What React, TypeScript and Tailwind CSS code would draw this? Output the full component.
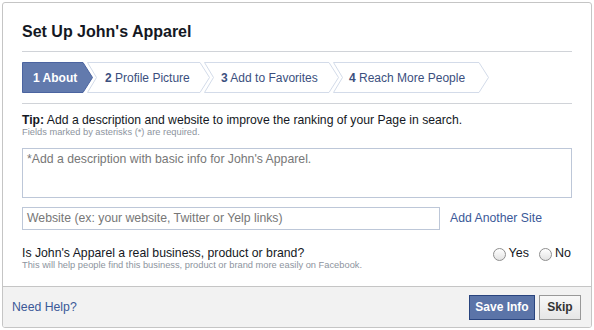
import React from "react";

const steps = [
  { n: "1", label: "About", w: 71, cls: "w-[71px] pl-[11px]", notch: false, active: true },
  { n: "2", label: "Profile Picture", w: 123, cls: "w-[123px] pl-[18px] -ml-1.5", notch: true, active: false },
  { n: "3", label: "Add to Favorites", w: 135, cls: "w-[135px] pl-[17px] -ml-1.5", notch: true, active: false },
  { n: "4", label: "Reach More People", w: 156, cls: "w-[156px] pl-[16px] -ml-1.5", notch: true, active: false },
];

function StepShape({ w, notch, active }: { w: number; notch: boolean; active: boolean }) {
  const h = 31;
  const pts = [
    [0.5, 0.5],
    [w - 10, 0.5],
    [w - 0.5, 15.5],
    [w - 10, 30.5],
    [0.5, 30.5],
  ];
  if (notch) pts.push([9.5, 15.5]);
  return (
    <svg className="absolute inset-0" width={w} height={h} viewBox={`0 0 ${w} ${h}`}>
      <polygon
        points={pts.map((p) => p.join(",")).join(" ")}
        fill={active ? "#627aad" : "#ffffff"}
        stroke={active ? "#4b64a0" : "#d3dbe9"}
        strokeWidth="1"
      />
    </svg>
  );
}

function Radio({ label }: { label: string }) {
  return (
    <label className="flex items-center gap-[3px]">
      <span className="mt-[3px] w-[13px] h-[13px] rounded-full border border-[#8e8e8e] bg-gradient-to-b from-white to-[#e3e3e3]" />
      <span className="text-[12.5px] text-[#141823]">{label}</span>
    </label>
  );
}

export default function App() {
  return (
    <div className="w-[594px] h-[330px] bg-white p-[2px] font-['Liberation_Sans',Arial,sans-serif]">
      <div className="w-[590px] h-[326px] flex flex-col border border-[#c5c5c5] rounded-[3px] overflow-hidden bg-white">
        <div className="flex-1 px-[19px]">
          {/* Header */}
          <div className="pt-[19px] pb-[9px] border-b border-[#d0d3d8]">
            <h1 className="text-[16px] leading-[20px] font-bold text-[#141823]">Set Up John's Apparel</h1>
          </div>

          {/* Steps */}
          <div className="py-[10px] border-b border-[#d0d3d8]">
            <div className="flex h-[31px]">
              {steps.map((s) => (
                <div key={s.n} className={`relative h-full flex items-center ${s.cls}`}>
                  <StepShape w={s.w} notch={s.notch} active={s.active} />
                  <span
                    className={`relative text-[12px] whitespace-nowrap ${
                      s.active ? "text-white font-bold" : "text-[#3b4f7e]"
                    }`}
                  >
                    <span className="font-bold">{s.n}</span> {s.label}
                  </span>
                </div>
              ))}
            </div>
          </div>

          {/* Body */}
          <div className="pt-[9px]">
            <p className="text-[12.2px] leading-[14px] text-[#141823]">
              <span className="font-bold">Tip:</span> Add a description and website to improve the ranking of your Page in search.
            </p>
            <p className="text-[9.3px] leading-[11px] text-[#8d949e]">Fields marked by asterisks (*) are required.</p>

            <div className="mt-[10px] h-[50px] border border-[#bdc7d8] px-[4px] pt-[3px] text-[12.25px] leading-[15px] text-[#777]">
              *Add a description with basic info for John's Apparel.
            </div>

            <div className="mt-[9px] flex items-center">
              <div className="w-[418px] h-[23px] border border-[#bdc7d8] px-[4px] flex items-center text-[12.25px] text-[#777]">
                Website (ex: your website, Twitter or Yelp links)
              </div>
              <a className="ml-[10px] text-[12.25px] text-[#3b5998]">Add Another Site</a>
            </div>

            <div className="mt-[16px] flex items-start justify-between">
              <div>
                <p className="text-[12.25px] leading-[14px] text-[#141823]">Is John's Apparel a real business, product or brand?</p>
                <p className="text-[9.3px] leading-[11px] text-[#8d949e]">
                  This will help people find this business, product or brand more easily on Facebook.
                </p>
              </div>
              <div className="flex items-center gap-[10px] pr-[1px] -mt-[2px]">
                <Radio label="Yes" />
                <Radio label="No" />
              </div>
            </div>
          </div>
        </div>

        {/* Footer */}
        <div className="h-[41px] border-t border-[#c5c5c5] bg-[#f2f2f2] flex items-center justify-between pl-[9px] pr-[10px]">
          <a className="text-[12.25px] text-[#3b5998]">Need Help?</a>
          <div className="flex gap-[4px]">
            <button className="w-[66px] h-[25px] bg-[#5b74a8] border border-[#29447e] text-white text-[12px] font-bold">
              Save Info
            </button>
            <button className="w-[42px] h-[25px] bg-gradient-to-b from-[#f8f8f8] to-[#e6e6e6] border border-[#999] text-[#333] text-[12px] font-bold">
              Skip
            </button>
          </div>
        </div>
      </div>
    </div>
  );
}
